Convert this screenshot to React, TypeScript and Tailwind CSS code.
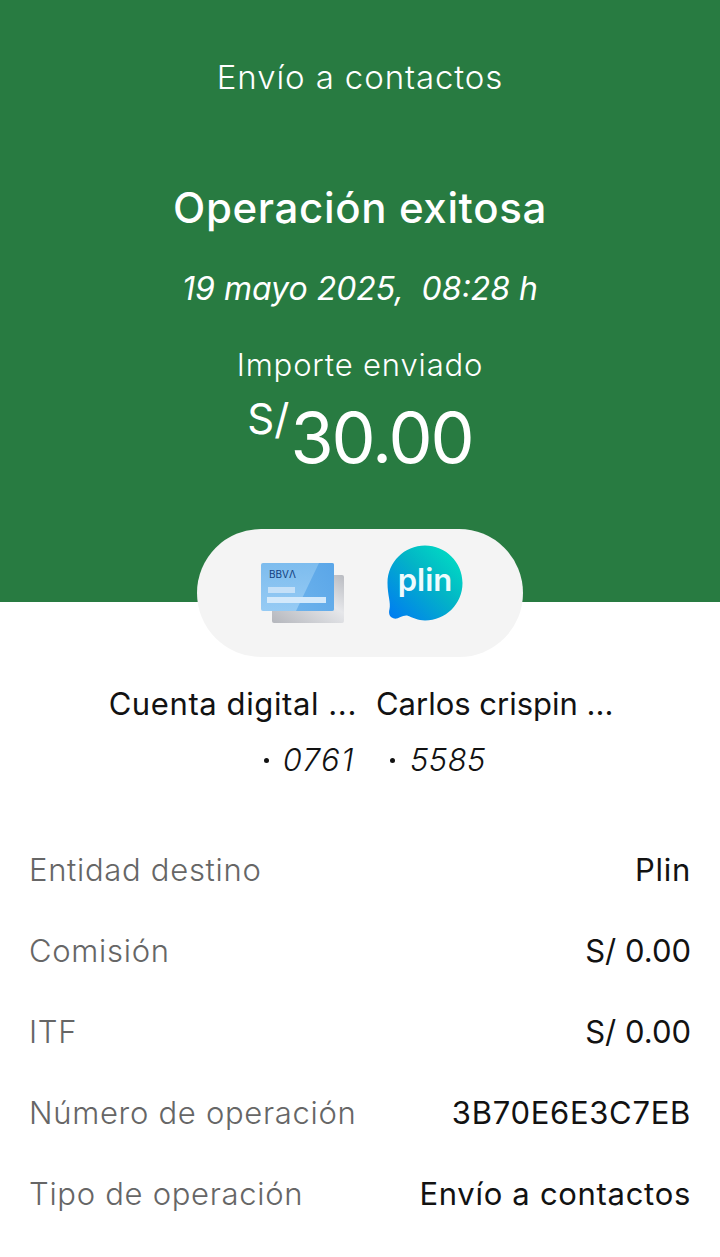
const rows = [
  ["Entidad destino", "Plin"],
  ["Comisión", "S/ 0.00"],
  ["ITF", "S/ 0.00"],
  ["Número de operación", "3B70E6E3C7EB"],
  ["Tipo de operación", "Envío a contactos"],
];

const CardIcon = () => (
  <svg width="84" height="62" viewBox="0 0 84 62">
    <defs>
      <linearGradient id="back" x1="0" y1="1" x2="1" y2="0">
        <stop offset="0" stopColor="#b4b6bc" />
        <stop offset="0.6" stopColor="#e6e7ea" />
        <stop offset="1" stopColor="#b9bbc1" />
      </linearGradient>
      <linearGradient id="front" x1="0" y1="0" x2="0" y2="1">
        <stop offset="0" stopColor="#7dbcee" />
        <stop offset="1" stopColor="#96cbf4" />
      </linearGradient>
      <linearGradient id="stripe" x1="1" y1="0" x2="0" y2="1">
        <stop offset="0" stopColor="#5aa6e8" />
        <stop offset="1" stopColor="#6cb2ec" />
      </linearGradient>
    </defs>
    <rect x="11" y="12" width="72" height="48" rx="2" fill="url(#back)" />
    <rect x="0" y="0" width="73" height="48" rx="2" fill="url(#front)" />
    <path d="M58 0h13a2 2 0 0 1 2 2v44a2 2 0 0 1-2 2H35z" fill="url(#stripe)" />
    <text x="8" y="15" fontSize="10" fontFamily="Inter, sans-serif" fontWeight="400" fill="#12407f">BBVΛ</text>
    <rect x="7" y="24" width="27" height="6" fill="#c4e0f8" />
    <rect x="6" y="34" width="59" height="6" fill="#d3e9fb" />
  </svg>
);

const PlinIcon = () => (
  <svg width="76" height="76" viewBox="0 0 76 76">
    <defs>
      <linearGradient id="plin" x1="0" y1="1" x2="1" y2="0">
        <stop offset="0" stopColor="#0078f5" />
        <stop offset="0.55" stopColor="#03b4c6" />
        <stop offset="1" stopColor="#00e6c3" />
      </linearGradient>
    </defs>
    <path
      d="M38 0.500C58.500 0.500 75.500 17 75.500 38C75.500 59 58.500 75.500 38 75.500C31 75.500 26 72.500 20 70.500C15 70 11 74.500 7 73.500C2 72 1.500 68 2.500 64C4 58 0.500 50 0.500 38C0.500 17 17.500 0.500 38 0.500Z"
      fill="url(#plin)"
    />
    <text x="38" y="46" textAnchor="middle" fontSize="31" fontWeight="600" fontFamily="Inter, sans-serif" fill="#eefbfd">plin</text>
  </svg>
);

export default function App() {
  return (
    <div className="w-[720px] h-[1257px] bg-white overflow-hidden font-['Inter',sans-serif]">
      <div className="h-[602px] bg-[#287b41] text-white flex flex-col items-center">
        <h1 className="mt-[56px] text-[33px] leading-[42px] font-light tracking-[0.9px]">Envío a contactos</h1>
        <h2 className="mt-[86px] text-[42px] leading-[48px] font-medium tracking-[0.65px]">Operación exitosa</h2>
        <p className="mt-[35px] text-[32px] leading-[44px] italic font-normal whitespace-pre">19 mayo 2025,  08:28 h</p>
        <p className="mt-[33px] text-[31px] leading-[42px] font-light tracking-[0.85px]">Importe enviado</p>
        <div className="flex items-start mt-[9px]">
          <span className="text-[42px] leading-[48px] font-normal">S/</span>
          <span className="text-[70px] leading-[76px] font-normal mt-[5px] ml-[1px] tracking-[-2px]">30.00</span>
        </div>
      </div>

      <div className="relative -mt-[73px] mx-auto w-[326px] h-[128px] rounded-[64px] bg-[#f4f4f4] flex items-start justify-center">
        <div className="ml-[4px] mt-[34px]"><CardIcon /></div>
        <div className="ml-[-11px] mt-[16px] pl-[53px]"><PlinIcon /></div>
      </div>

      <div className="flex justify-center gap-[19px] mt-[26px] ml-[2px] text-[31px] leading-[42px] text-[#121212]">
        <div className="flex flex-col items-end">
          <span className="tracking-[0.6px]">Cuenta digital ...</span>
          <span className="mt-[14px] mr-[2px] italic font-light flex items-center">
            <span className="w-[5px] h-[5px] rounded-full bg-[#121212] mr-[14px]" />
            <span className="tracking-[1.5px]">0761</span>
          </span>
        </div>
        <div className="flex flex-col items-start">
          <span>Carlos crispin ...</span>
          <span className="mt-[14px] ml-[14px] italic font-light flex items-center">
            <span className="w-[5px] h-[5px] rounded-full bg-[#121212] mr-[15px]" />
            <span className="tracking-[0.5px]">5585</span>
          </span>
        </div>
      </div>

      <div className="mt-[68px] pl-[29px] pr-[29px] flex flex-col gap-[39px]">
        {rows.map(([label, value]) => (
          <div key={label} className="flex justify-between text-[31px] leading-[42px] tracking-[0.7px]">
            <span className="font-light text-[#666666]">{label}</span>
            <span className={value.startsWith("S/") ? "text-[#121212] tracking-normal" : "text-[#121212]"}>{value}</span>
          </div>
        ))}
      </div>
    </div>
  );
}
